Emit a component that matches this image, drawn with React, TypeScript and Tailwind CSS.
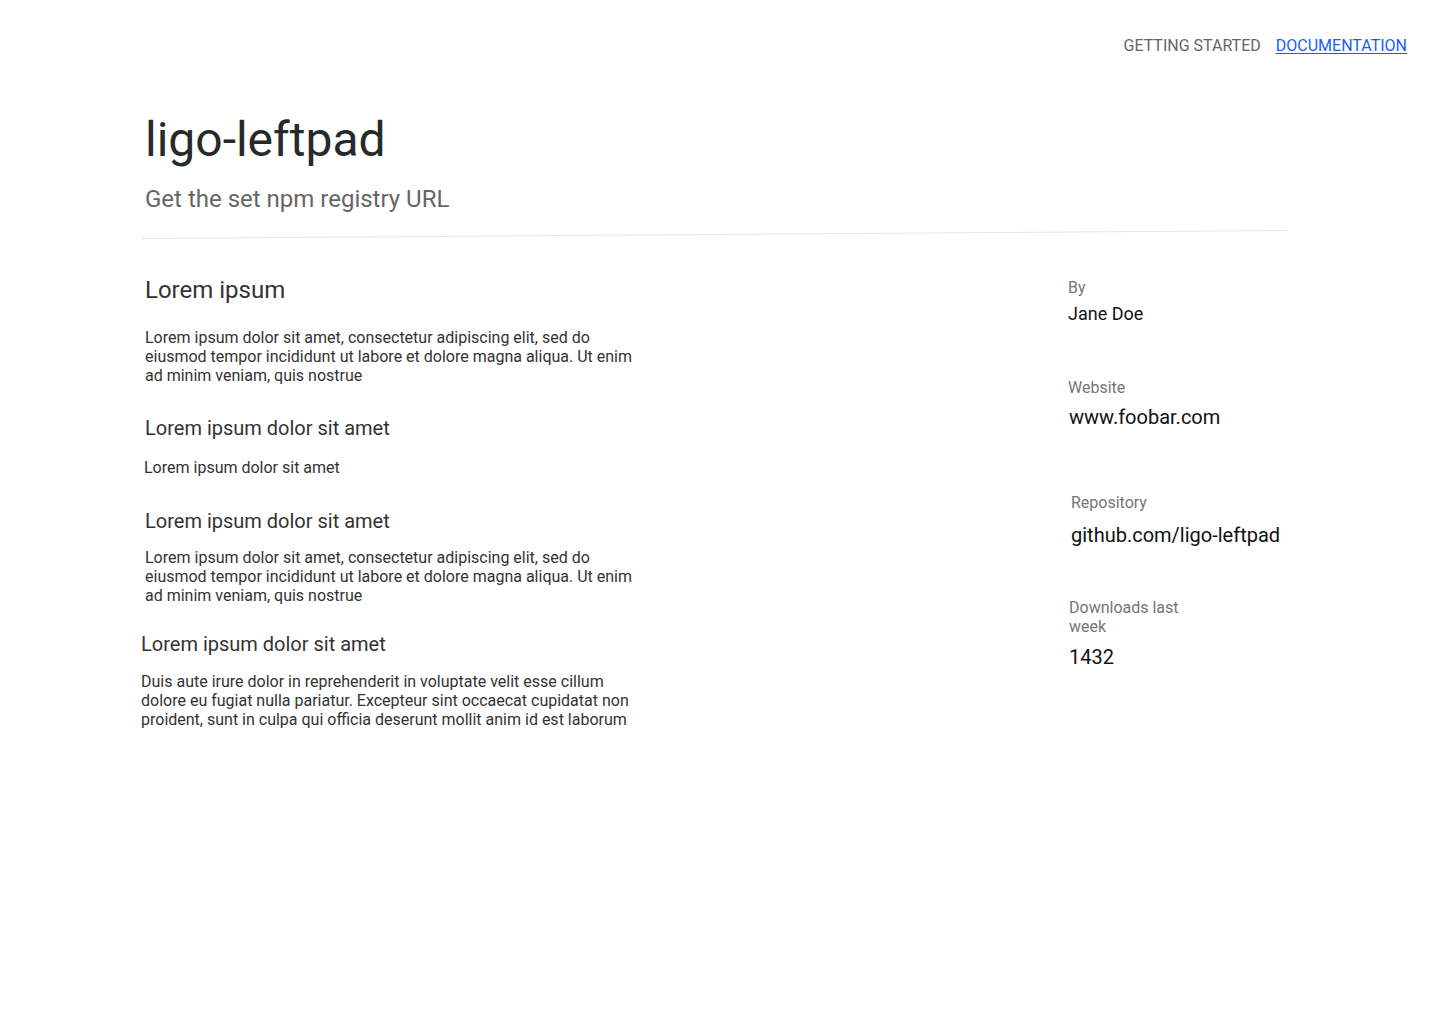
import React from "react";

interface Section {
    title: string;
    body: string;
    titleClass: string;
    bodyClass: string;
}

const sections: Section[] = [
    {
        title: "Lorem ipsum dolor sit amet",
        body: "Lorem ipsum dolor sit amet",
        titleClass: "mt-[31px] pl-[4px]",
        bodyClass: "mt-[18px] pl-[3px]",
    },
    {
        title: "Lorem ipsum dolor sit amet",
        body: "Lorem ipsum dolor sit amet, consectetur adipiscing elit, sed do eiusmod tempor incididunt ut labore et dolore magna aliqua. Ut enim ad minim veniam, quis nostrue",
        titleClass: "mt-[32px] pl-[4px]",
        bodyClass: "mt-[15px] pl-[4px]",
    },
    {
        title: "Lorem ipsum dolor sit amet",
        body: "Duis aute irure dolor in reprehenderit in voluptate velit esse cillum dolore eu fugiat nulla pariatur. Excepteur sint occaecat cupidatat non proident, sunt in culpa qui officia deserunt mollit anim id est laborum",
        titleClass: "mt-[27px]",
        bodyClass: "mt-[16px]",
    },
];

export default function App() {
    return (
        <div className="min-h-screen w-[1440px] bg-white font-['Roboto',sans-serif] text-[#333]">
            {/* Top nav */}
            <nav className="flex justify-end gap-[15px] pr-[33px] pt-[36px] text-[16px] leading-[20px]">
                <a className="text-[#666]">GETTING STARTED</a>
                <a className="text-[#1a5cff] underline underline-offset-2">DOCUMENTATION</a>
            </nav>

            <main className="pl-[141px]">
                {/* Header */}
                <header className="mt-[56px] pl-[4px]">
                    <h1 className="text-[48px] leading-[56px] text-[#262a2a]">ligo-leftpad</h1>
                    <p className="mt-[15px] text-[24px] leading-[32px] text-[#666]">Get the set npm registry URL</p>
                </header>

                {/* divider, drawn a touch off level as in the mockup */}
                <svg className="mt-[15px] block" width="1146" height="10" viewBox="0 0 1146 10">
                    <line x1="0" y1="8.5" x2="1146" y2="0.5" stroke="#e6e6e6" strokeWidth="1" />
                </svg>

                <div className="flex">
                    {/* Content */}
                    <section className="w-[500px] pt-[35px]">
                        <h2 className="pl-[4px] text-[24px] leading-[30px] text-[#333]">Lorem ipsum</h2>
                        <p className="mt-[23px] pl-[4px] text-[16px] leading-[19px] text-[#333]">
                            Lorem ipsum dolor sit amet, consectetur adipiscing elit, sed do eiusmod tempor incididunt ut labore et dolore magna aliqua. Ut enim ad minim veniam, quis nostrue
                        </p>
                        {sections.map((s, i) => (
                            <div key={i}>
                                <h3 className={`${s.titleClass} text-[20px] leading-[24px] text-[#333]`}>{s.title}</h3>
                                <p className={`${s.bodyClass} text-[16px] leading-[19px] text-[#333]`}>{s.body}</p>
                            </div>
                        ))}
                    </section>

                    {/* Sidebar meta */}
                    <aside className="ml-[427px] w-[220px] pt-[38px]">
                        <div>
                            <p className="text-[16px] leading-[20px] text-[#757575]">By</p>
                            <p className="mt-[5px] text-[18px] leading-[22px] text-[#111]">Jane Doe</p>
                        </div>
                        <div className="mt-[53px]">
                            <p className="text-[16px] leading-[20px] text-[#757575]">Website</p>
                            <p className="mt-[7px] pl-[1px] text-[20px] leading-[24px] text-[#111]">www.foobar.com</p>
                        </div>
                        <div className="mt-[64px] pl-[3px]">
                            <p className="text-[16px] leading-[20px] text-[#757575]">Repository</p>
                            <p className="mt-[10px] text-[20px] leading-[24px] text-[#111]">github.com/ligo-leftpad</p>
                        </div>
                        <div className="mt-[51px] pl-[1px]">
                            <p className="w-[120px] text-[16px] leading-[19px] text-[#757575]">Downloads last week</p>
                            <p className="mt-[9px] text-[20px] leading-[24px] text-[#111]">1432</p>
                        </div>
                    </aside>
                </div>
            </main>
        </div>
    );
}
